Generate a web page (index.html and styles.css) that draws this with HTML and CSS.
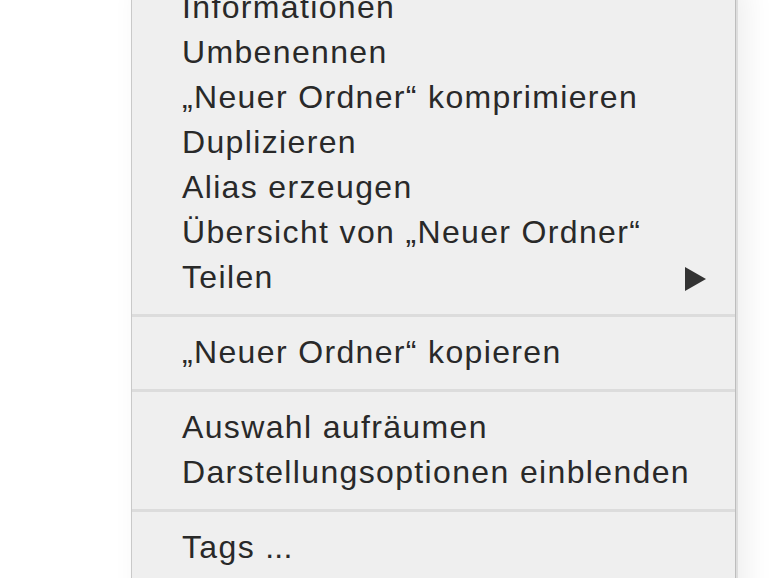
FILE: index.html
```html
<!DOCTYPE html>
<html lang="de">
<head>
<meta charset="utf-8">
<title>Kontextmenü</title>
<link rel="stylesheet" href="styles.css">
</head>
<body>
<div class="stage">
  <div class="menu">
    <div class="item">Informationen</div>
    <div class="item">Umbenennen</div>
    <div class="item">„Neuer Ordner“ komprimieren</div>
    <div class="item">Duplizieren</div>
    <div class="item">Alias erzeugen</div>
    <div class="item">Übersicht von „Neuer Ordner“</div>
    <div class="item has-sub"><span>Teilen</span><svg class="arrow" width="21" height="24" viewBox="0 0 21 24"><path d="M0 0 L21 12 L0 24 Z"/></svg></div>
    <div class="sep"></div>
    <div class="item">„Neuer Ordner“ kopieren</div>
    <div class="sep"></div>
    <div class="item">Auswahl aufräumen</div>
    <div class="item">Darstellungsoptionen einblenden</div>
    <div class="sep"></div>
    <div class="item">Tags <span class="dots">...</span></div>
    <div class="item">&nbsp;</div>
  </div>
</div>
</body>
</html>
```

FILE: styles.css
```css
html, body {
  margin: 0;
  padding: 0;
  background: #ffffff;
  width: 770px;
  height: 578px;
  overflow: hidden;
}

.stage {
  width: 770px;
  height: 578px;
  overflow: hidden;
  padding-left: 131px;
  box-sizing: border-box;
}

.menu {
  width: 605px;
  box-sizing: border-box;
  margin-top: -15px;
  background: #efefef;
  border-left: 1px solid #c9c9c9;
  border-right: 1px solid #bdbdbd;
  box-shadow: 4px 0 0 -2px #dddddd, 10px 0 28px rgba(0, 0, 0, 0.07);
  font-family: "Liberation Sans", Arial, sans-serif;
  font-size: 32px;
  letter-spacing: 1.35px;
  color: #292929;
}

.item {
  height: 45px;
  line-height: 45px;
  padding-left: 50px;
  padding-right: 29px;
  white-space: nowrap;
}

.dots {
  letter-spacing: 0.2px;
}

.has-sub {
  display: flex;
  align-items: center;
  justify-content: space-between;
}

.arrow {
  display: block;
  fill: #333333;
  margin-top: 2px;
}

.sep {
  height: 3px;
  margin: 14px 0 13px;
  background: #dcdcdc;
}
```
